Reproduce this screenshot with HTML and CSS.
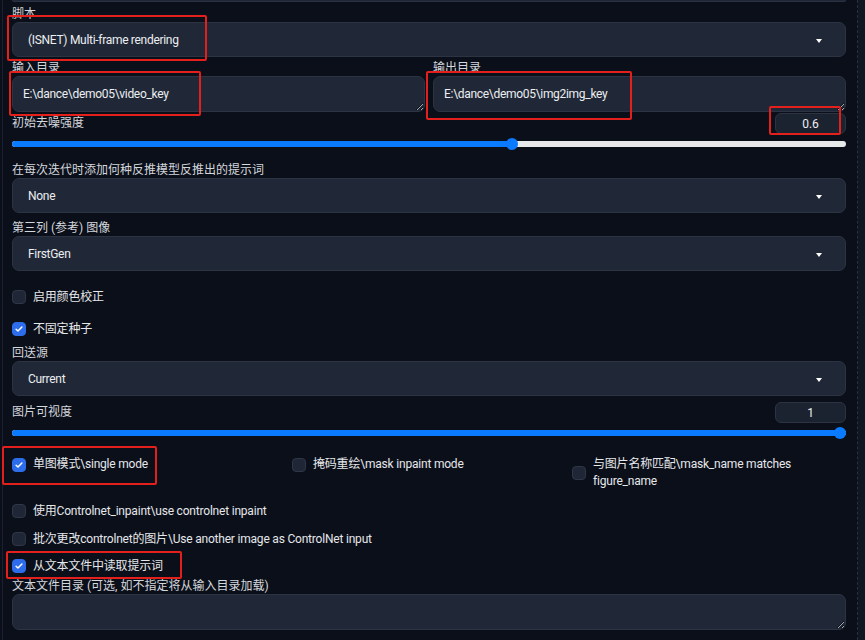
FILE: index.html
```html
<!DOCTYPE html>
<html lang="zh">
<head>
    <meta charset="UTF-8">
    <meta name="viewport" content="width=device-width, initial-scale=1.0">
    <title>ISNET Multi-frame rendering</title>
    <link rel="stylesheet" href="styles.css">
</head>
<body>
    <div class="page">
        <div class="edge-left"></div>

        <div class="panel">
            <div class="stub"></div>

            <div class="field mt-2">
                <div class="label">脚本</div>
                <div class="select">(ISNET) Multi-frame rendering<span class="caret"></span></div>
            </div>

            <div class="dirs mt-1">
                <div class="field">
                    <div class="label">输入目录</div>
                    <textarea class="textbox" rows="1">E:\dance\demo05\video_key</textarea>
                </div>
                <div class="field">
                    <div class="label">输出目录</div>
                    <textarea class="textbox" rows="1">E:\dance\demo05\img2img_key</textarea>
                </div>
            </div>

            <div class="slider mt-1">
                <div class="slider-head">
                    <div class="label">初始去噪强度</div>
                    <div class="number">0.6</div>
                </div>
                <div class="track">
                    <div class="fill" style="width: 60%"></div>
                    <div class="thumb" style="left: 60%"></div>
                </div>
            </div>

            <div class="field mt-10">
                <div class="label">在每次迭代时添加何种反推模型反推出的提示词</div>
                <div class="select">None<span class="caret"></span></div>
            </div>

            <div class="field mt-5">
                <div class="label">第三列 (参考) 图像</div>
                <div class="select">FirstGen<span class="caret"></span></div>
            </div>

            <label class="check mt-16"><span class="box"></span>启用颜色校正</label>
            <label class="check mt-12"><span class="box on"></span>不固定种子</label>

            <div class="field mt-4">
                <div class="label">回送源</div>
                <div class="select">Current<span class="caret"></span></div>
            </div>

            <div class="slider mt-6">
                <div class="slider-head">
                    <div class="label">图片可视度</div>
                    <div class="number">1</div>
                </div>
                <div class="track">
                    <div class="fill" style="width: 100%"></div>
                    <div class="thumb thumb-end" style="left: 100%"></div>
                </div>
            </div>

            <div class="check-row">
                <label class="check"><span class="box on"></span>单图模式\single mode</label>
                <label class="check"><span class="box"></span>掩码重绘\mask inpaint mode</label>
                <label class="check"><span class="box"></span><span>与图片名称匹配\mask_name matches<br>figure_name</span></label>
            </div>

            <label class="check mt-11"><span class="box"></span>使用Controlnet_inpaint\use controlnet inpaint</label>
            <label class="check mt-8"><span class="box"></span>批次更改controlnet的图片\Use another image as ControlNet input</label>
            <label class="check mt-7"><span class="box on"></span>从文本文件中读取提示词</label>

            <div class="field">
                <div class="label">文本文件目录 (可选, 如不指定将从输入目录加载)</div>
                <textarea class="textbox" rows="1"></textarea>
            </div>
        </div>

        <div class="edge-right"></div>
    </div>

    <!-- красные пометки поверх скриншота -->
    <div class="mark mark-1"></div>
    <div class="mark mark-2"></div>
    <div class="mark mark-3"></div>
    <div class="mark mark-4"></div>
    <div class="mark mark-5"></div>
    <div class="mark mark-6"></div>
</body>
</html>
```

FILE: styles.css
```css
body {
    margin: 0;
    background-color: #0b0f19;
    font-family: Roboto, "Noto Sans CJK SC", sans-serif;
    font-size: 12px;
    color: #e5e7eb;
    overflow: hidden;
}

.page {
    display: flex;
    height: 640px;
}

.edge-left {
    width: 1px;
    margin-left: 2px;
    background-color: #1b2130;
}

.panel {
    width: 834px;
    padding: 0 7px 0 9px;
    display: flex;
    flex-direction: column;
}

.edge-right {
    width: 7px;
    margin-left: 4px;
    border-left: 1px dashed #2a3140;
    box-shadow: inset -7px 0 0 #111623;
}

.stub {
    height: 1px;
    border: 1px solid #2a3241;
    border-top: none;
    border-radius: 0 0 6px 6px;
    background-color: #202837;
}

/* Отступы */
.mt-1 { margin-top: 1px; }
.mt-2 { margin-top: 2px; }
.mt-4 { margin-top: 4px; }
.mt-5 { margin-top: 5px; }
.mt-6 { margin-top: 6px; }
.mt-7 { margin-top: 7px; }
.mt-8 { margin-top: 8px; }
.mt-10 { margin-top: 10px; }
.mt-11 { margin-top: 11px; }
.mt-12 { margin-top: 12px; }
.mt-16 { margin-top: 16px; }

.field {
    display: flex;
    flex-direction: column;
}

.label {
    padding-top: 2px;
    line-height: 16px;
    color: #d4d7dc;
}

.select {
    position: relative;
    height: 35px;
    box-sizing: border-box;
    padding: 0 15px;
    display: flex;
    align-items: center;
    background-color: #202837;
    border: 1px solid #2c3443;
    border-radius: 7px;
    color: #eceef1;
    letter-spacing: -0.3px;
}

.caret {
    position: absolute;
    right: 23px;
    top: 16px;
    width: 0;
    height: 0;
    border-left: 3px solid transparent;
    border-right: 3px solid transparent;
    border-top: 4px solid #ffffff;
}

.dirs {
    display: grid;
    grid-template-columns: 1fr 1fr;
    gap: 8px;
}

.textbox {
    display: block;
    height: 36px;
    box-sizing: border-box;
    padding: 9px 10px;
    background-color: #202837;
    border: 1px solid #2c3443;
    border-radius: 7px;
    color: #eceef1;
    font-family: Roboto, "Noto Sans CJK SC", sans-serif;
    font-size: 12px;
    line-height: 16px;
    letter-spacing: -0.3px;
    resize: vertical;
    outline: none;
    overflow: hidden;
}

.slider-head {
    display: flex;
    justify-content: space-between;
    align-items: flex-start;
    height: 21px;
}

.number {
    width: 71px;
    height: 21px;
    box-sizing: border-box;
    border: 1px solid #2c3443;
    border-radius: 6px;
    background-color: #1c2330;
    display: flex;
    align-items: center;
    justify-content: center;
    color: #eceef1;
}

.track {
    position: relative;
    height: 6px;
    margin: 7px 0 3px;
    border-radius: 3px;
    background-color: #e8e9eb;
}

.fill {
    height: 100%;
    border-radius: 3px;
    background-color: #0a7bff;
}

.thumb {
    position: absolute;
    top: -3px;
    width: 12px;
    height: 12px;
    margin-left: -6px;
    border-radius: 50%;
    background-color: #0a7bff;
}

.thumb-end {
    margin-left: -12px;
}

.check {
    display: flex;
    align-items: center;
    gap: 7px;
    height: 20px;
    line-height: 17px;
    color: #e5e7eb;
    letter-spacing: -0.2px;
}

.box {
    flex: none;
    width: 14px;
    height: 14px;
    box-sizing: border-box;
    border: 1px solid #2f3746;
    border-radius: 4px;
    background-color: #1f2736;
}

.box.on {
    border-color: #2d6cea;
    background-color: #2d6cea;
    background-image: url("data:image/svg+xml,%3Csvg xmlns='http://www.w3.org/2000/svg' viewBox='0 0 14 14'%3E%3Cpath d='M3.6 7.2l2.2 2.2 4.6-4.8' fill='none' stroke='white' stroke-width='1.7' stroke-linecap='round' stroke-linejoin='round'/%3E%3C/svg%3E");
}

.check-row {
    display: grid;
    grid-template-columns: repeat(3, 1fr);
    gap: 6px;
    align-items: start;
    margin-top: 17px;
    height: 34px;
}

.check-row .check {
    height: auto;
    min-height: 17px;
}

/* Пометки */
.mark {
    position: absolute;
    border: 2px solid #e3201c;
    border-radius: 2px;
    pointer-events: none;
}

.mark-1 { left: 7px; top: 15px; width: 196px; height: 42px; }
.mark-2 { left: 9px; top: 71px; width: 188px; height: 41px; }
.mark-3 { left: 426px; top: 71px; width: 202px; height: 45px; }
.mark-4 { left: 769px; top: 106px; width: 68px; height: 25px; }
.mark-5 { left: 2px; top: 446px; width: 151px; height: 35px; }
.mark-6 { left: 6px; top: 551px; width: 172px; height: 24px; }
```
